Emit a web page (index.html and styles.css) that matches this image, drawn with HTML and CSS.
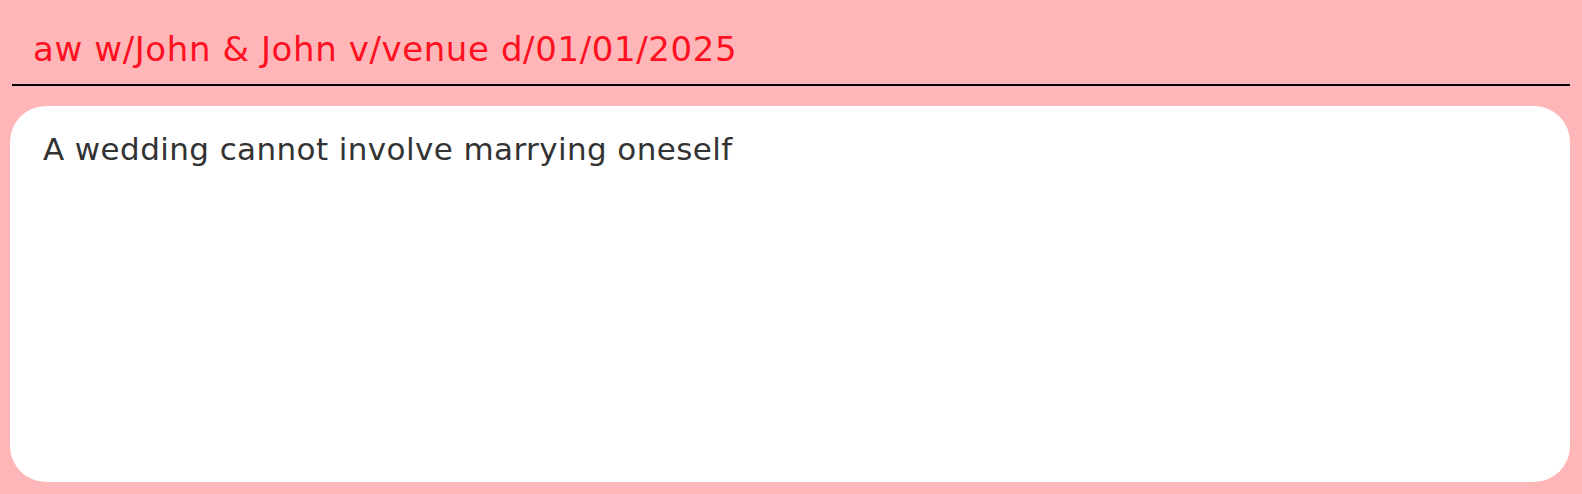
FILE: index.html
```html
<!DOCTYPE html>
<html>
<head>
<meta charset="utf-8">
<link rel="stylesheet" href="styles.css">
</head>
<body>
<div class="page">
  <div class="command-box">
    <div class="command-text">aw w/John &amp; John v/venue d/01/01/2025</div>
  </div>
  <div class="result-card">
    <div class="result-text">A wedding cannot involve marrying oneself</div>
  </div>
</div>
</body>
</html>
```
FILE: styles.css
```css
html, body {
  margin: 0;
  padding: 0;
  background: #ffb6b9;
}
body {
  width: 1582px;
  height: 494px;
  overflow: hidden;
}
.page {
  display: flex;
  flex-direction: column;
  padding: 0 12px 12px 10px;
  height: 494px;
  box-sizing: border-box;
}
.command-box {
  margin-left: 2px;
  padding: 25px 0 11px 21px;
  border-bottom: 2px solid #000;
}
.command-text {
  font-family: "DejaVu Sans", sans-serif;
  font-size: 34px;
  letter-spacing: 0.6px;
  line-height: 48px;
  color: #ff1021;
  white-space: nowrap;
}
.result-card {
  margin-top: 20px;
  flex: 1;
  background: #fff;
  border-radius: 36px;
  padding: 19px 32px 19px 33px;
}
.result-text {
  font-family: "DejaVu Sans", sans-serif;
  font-size: 31px;
  letter-spacing: 0.4px;
  line-height: 48px;
  color: #333333;
  white-space: nowrap;
}
```
